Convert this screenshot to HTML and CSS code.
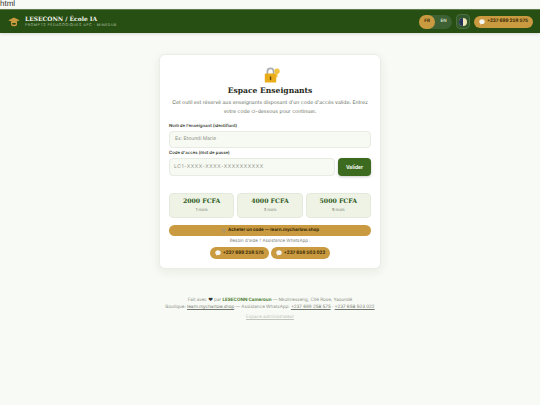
FILE: index.html
```html
<!DOCTYPE html>
<html lang="fr">
<head>
  <meta charset="UTF-8" />
  <meta name="viewport" content="width=device-width, initial-scale=1.0" />
  <title>LESECONN / École IA</title>
  <link rel="stylesheet" href="styles.css">
</head>
<body>
  <div class="doc-label">html</div>

  <header class="topbar">
    <div class="brand">
      <svg class="brand-icon" viewBox="0 0 12 10" width="12" height="10">
        <path d="M3 4.500h6v3c0 1-1.200 1.800-3 1.800s-3-.8-3-1.800z" fill="#c99a3f"/>
        <path d="M6 .6l5.600 2.600L6 5.800.4 3.200z" fill="#c99a3f"/>
        <path d="M4.200 6.100h3.600v1.200c-.5.5-3.100.5-3.600 0z" fill="#274e13"/>
      </svg>
      <div>
        <div class="brand-name">LESECONN / École IA</div>
        <div class="brand-sub">PROMPTS PÉDAGOGIQUES APC · MINEDUB</div>
      </div>
    </div>
    <div class="top-actions">
      <div class="lang-switch">
        <span class="lang lang-on">FR</span>
        <span class="lang">EN</span>
      </div>
      <div class="theme-btn">
        <svg viewBox="0 0 8 8" width="8" height="8">
          <circle cx="4" cy="4" r="4" fill="#f3e6b8"/>
          <path d="M4 0a4 4 0 0 0 0 8z" fill="#26345a"/>
        </svg>
      </div>
      <a class="pill" href="#"><svg class="bubble" viewBox="0 0 8 8" width="6" height="6"><path d="M4 .4c2.200 0 3.700 1.400 3.700 3.200S6.200 6.800 4 6.800l-.8 0L1.600 7.800l.2-1.600C.8 5.600.3 4.700.3 3.600.3 1.800 1.800.4 4 .4z" fill="#f4f4f0"/></svg>+237 699 258 575</a>
    </div>
  </header>

  <main class="page">
    <section class="card">
      <svg class="lock" viewBox="0 0 18 18" width="18" height="18">
        <path d="M3.500 8V5.500a4 4 0 0 1 8 0V8h-1.800V5.500a2.200 2.200 0 0 0-4.400 0V8z" fill="#a9aeb5"/>
        <rect x="1.800" y="7.600" width="11.400" height="9" rx="1.200" fill="#e9ad1c"/>
        <rect x="6.900" y="10.500" width="1.300" height="3.600" fill="#5b4310"/>
        <circle cx="14" cy="5.200" r="2.700" fill="#f2c23e"/>
        <rect x="12.800" y="6.500" width="1.700" height="4.800" fill="#f2c23e"/>
      </svg>
      <h1>Espace Enseignants</h1>
      <p class="intro">Cet outil est réservé aux enseignants disposant d'un code d'accès valide. Entrez votre code ci-dessous pour continuer.</p>

      <label class="field-label">Nom de l'enseignant (identifiant)</label>
      <div class="input">Ex: Etoundi Marie</div>

      <label class="field-label">Code d'accès (mot de passe)</label>
      <div class="code-row">
        <div class="input input-code">LC1-XXXX-XXXX-XXXXXXXXXX</div>
        <button class="validate">Valider</button>
      </div>

      <div class="prices">
        <div class="price"><strong>2000 FCFA</strong><span>1 mois</span></div>
        <div class="price"><strong>4000 FCFA</strong><span>3 mois</span></div>
        <div class="price"><strong>5000 FCFA</strong><span>9 mois</span></div>
      </div>

      <a class="buy" href="#">
        <svg viewBox="0 0 8 8" width="5" height="5"><path d="M.5 1h1.200l1 4h3.800l.9-3H2.200" fill="none" stroke="#9a9484" stroke-width="1"/><circle cx="3" cy="6.800" r=".8" fill="#9a9484"/><circle cx="6" cy="6.800" r=".8" fill="#9a9484"/></svg>
        Acheter un code — learn.mycharlow.shop
      </a>

      <p class="help">Besoin d'aide ? Assistance WhatsApp :</p>
      <div class="help-links">
        <a class="pill" href="#"><svg class="bubble" viewBox="0 0 8 8" width="6" height="6"><path d="M4 .4c2.200 0 3.700 1.400 3.700 3.200S6.200 6.800 4 6.800l-.8 0L1.600 7.800l.2-1.600C.8 5.600.3 4.700.3 3.600.3 1.800 1.800.4 4 .4z" fill="#f4f4f0"/></svg>+237 699 258 575</a>
        <a class="pill" href="#"><svg class="bubble" viewBox="0 0 8 8" width="6" height="6"><path d="M4 .4c2.200 0 3.700 1.400 3.700 3.200S6.200 6.800 4 6.800l-.8 0L1.600 7.800l.2-1.600C.8 5.600.3 4.700.3 3.600.3 1.800 1.800.4 4 .4z" fill="#f4f4f0"/></svg>+237 658 503 022</a>
      </div>
    </section>

    <footer class="footer">
      <p>Fait avec <span class="heart">❤</span> par <b>LESECONN Cameroun</b> — Nkolmesseng, Cité Rose, Yaoundé</p>
      <p>Boutique: <a href="#">learn.mycharlow.shop</a> — Assistance WhatsApp: <a href="#">+237 699 258 575</a> · <a href="#">+237 658 503 022</a></p>
      <p class="admin"><a href="#">Espace administrateur</a></p>
    </footer>
  </main>
</body>
</html>
```

FILE: styles.css
```css
* {
  box-sizing: border-box;
  margin: 0;
  padding: 0;
}
body {
  font-family: 'Inter', 'Liberation Sans', sans-serif;
  background: #f8faf5;
  color: #1f2a1a;
  min-height: 100vh;
  text-rendering: geometricPrecision;
}
a {
  color: inherit;
}
.doc-label {
  height: 9px;
  font-size: 8px;
  line-height: 8px;
  color: #333;
  font-family: 'Liberation Sans', sans-serif;
}
.topbar {
  height: 24px;
  background: #274e13;
  border-top: 1px solid #5d7d4c;
  display: flex;
  justify-content: space-between;
  align-items: center;
  padding: 0 7px 0 8px;
  box-shadow: 0 1px 3px #0002;
}
.brand {
  display: flex;
  align-items: center;
  gap: 5px;
}
.brand-name {
  font-family: 'DejaVu Serif', serif;
  font-weight: 700;
  font-size: 5.950px;
  line-height: 7px;
  color: #f4f5ee;
}
.brand-sub {
  font-size: 3.600px;
  line-height: 5px;
  letter-spacing: 0.5px;
  color: #b5c4aa;
}
.top-actions {
  display: flex;
  align-items: center;
  gap: 4px;
}
.lang-switch {
  display: flex;
  background: #3d6132;
  border-radius: 8px;
  height: 14px;
  width: 33px;
}
.lang {
  flex: 1;
  font-size: 4.500px;
  font-weight: 700;
  line-height: 14px;
  text-align: center;
  color: #c7d6bd;
  border-radius: 8px;
}
.lang-on {
  background: #c99a3f;
  color: #3a2a08;
}
.theme-btn {
  width: 14px;
  height: 15px;
  background: #33592a;
  border: 1px solid #4c6e40;
  border-radius: 4px;
  display: flex;
  align-items: center;
  justify-content: center;
}
.pill {
  display: inline-flex;
  align-items: center;
  gap: 2px;
  background: #c99a3f;
  color: #3a2a08;
  font-size: 4.600px;
  font-weight: 700;
  height: 12px;
  padding: 0 5px;
  border-radius: 7px;
  text-decoration: none;
  white-space: nowrap;
}
.page {
  display: flex;
  flex-direction: column;
  align-items: center;
  padding-top: 21px;
}
.card {
  width: 222px;
  height: 215px;
  background: #fff;
  border: 1px solid #ebeee6;
  border-radius: 6px;
  box-shadow: 0 3px 10px #274e1314;
  padding: 11px 9px 0;
  display: flex;
  flex-direction: column;
}
.lock {
  align-self: center;
  margin-left: 3px;
}
h1 {
  font-family: 'DejaVu Serif', serif;
  font-size: 7.600px;
  font-weight: 700;
  line-height: 10px;
  text-align: center;
  color: #1f2a1a;
  margin-top: 2px;
}
.intro {
  font-size: 5.150px;
  line-height: 8.500px;
  text-align: center;
  color: #6b7266;
  margin-top: 3px;
  margin-bottom: 5px;
  padding: 0 2px;
}
.field-label {
  display: block;
  font-size: 4.300px;
  font-weight: 600;
  line-height: 6px;
  color: #2c3327;
  margin-top: 3px;
  margin-bottom: 1px;
}
.input {
  height: 17px;
  background: #f7f9f3;
  border: 1px solid #e8ebe2;
  border-radius: 4px;
  font-size: 5px;
  line-height: 15px;
  padding-left: 5px;
  color: #8c9286;
}
.code-row {
  display: flex;
  gap: 3px;
}
.input-code {
  flex: 1;
  height: 18px;
  line-height: 16px;
  padding-left: 4px;
  letter-spacing: 0.58px;
}
.validate {
  width: 33px;
  height: 18px;
  border: none;
  border-radius: 4px;
  background: #3c6a1f;
  color: #f3f6ee;
  font-family: inherit;
  font-size: 5px;
  font-weight: 700;
  box-shadow: 0 1px 3px #0003;
}
.prices {
  display: flex;
  gap: 3px;
  margin-top: 17px;
}
.price {
  flex: 1;
  height: 25px;
  background: #eef3e6;
  border: 1px solid #e4eadb;
  border-radius: 4px;
  display: flex;
  flex-direction: column;
  align-items: center;
  justify-content: center;
}
.price strong {
  font-family: 'DejaVu Serif', serif;
  font-size: 6.200px;
  line-height: 8px;
  color: #2f5a1c;
}
.price span {
  font-size: 4px;
  line-height: 7px;
  color: #7a8074;
}
.buy {
  display: flex;
  justify-content: center;
  align-items: center;
  gap: 2px;
  height: 11px;
  margin-top: 7px;
  background: #c99a3f;
  border-radius: 6px;
  color: #33260a;
  font-size: 4.460px;
  font-weight: 700;
  text-decoration: none;
}
.help {
  font-size: 4.400px;
  line-height: 6px;
  text-align: center;
  color: #85897f;
  margin-top: 3px;
}
.help-links {
  display: flex;
  justify-content: center;
  gap: 2px;
  margin-top: 2px;
}
.footer {
  margin-top: 28px;
  font-size: 4.550px;
  line-height: 7px;
  text-align: center;
  color: #8f9389;
}
.footer b {
  color: #4c7a30;
}
.footer a {
  color: #74796f;
}
.footer .heart {
  color: #333;
}
.footer .admin {
  margin-top: 3px;
}
.footer .admin a {
  color: #c0c4ba;
}
```
